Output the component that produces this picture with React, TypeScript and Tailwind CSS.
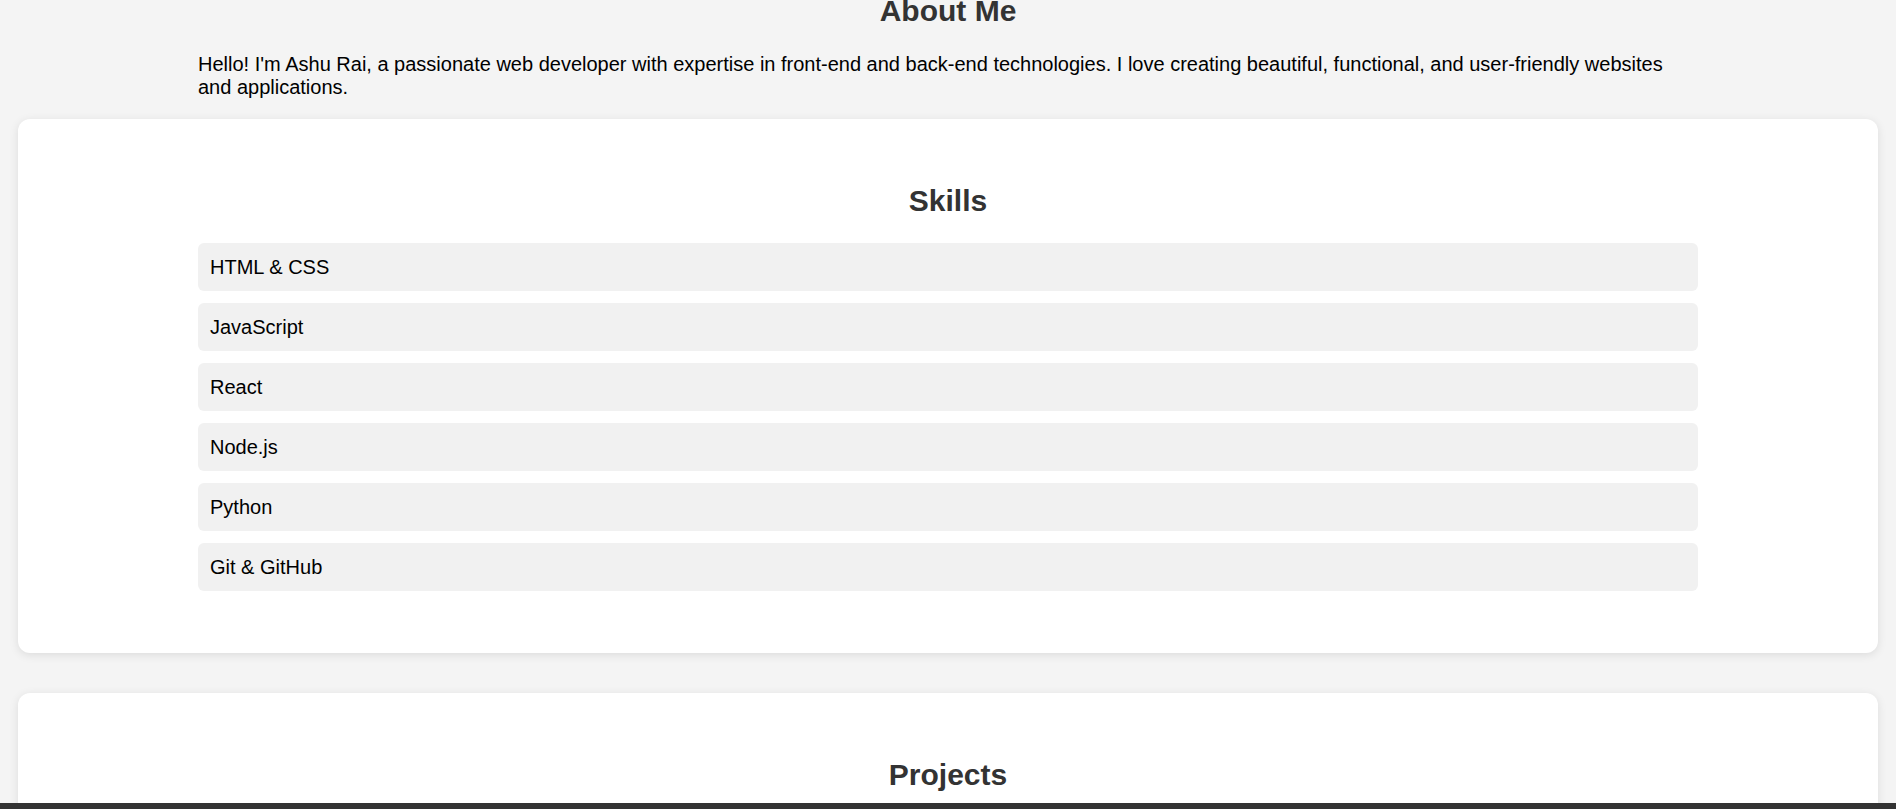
import React from 'react';

const skills = ['HTML & CSS', 'JavaScript', 'React', 'Node.js', 'Python', 'Git & GitHub'];

const FONT = "font-['Liberation_Sans',Arial,sans-serif]";
const HEADING = 'text-center text-[30px] font-bold leading-[33px] text-[#333]';
const CARD = 'mx-[18px] rounded-[12px] bg-white shadow-[0_2px_10px_rgba(0,0,0,0.1)]';

export default function App() {
  return (
    <div className={`flex h-[809px] flex-col overflow-hidden bg-[#f4f4f4] ${FONT}`}>
      <main className="min-h-0 flex-1 overflow-hidden">
        {/* ── About ── */}
        <section className="mx-auto max-w-[1500px] pb-[20px]">
          <h2 className={`-mt-[6px] ${HEADING}`}>About Me</h2>
          <p className="mt-[26px] text-[20px] leading-[23px] text-black">
            Hello! I'm Ashu Rai, a passionate web developer with expertise in front-end and back-end
            technologies. I love creating beautiful, functional, and user-friendly websites and
            applications.
          </p>
        </section>

        {/* ── Skills ── */}
        <section className={`${CARD} pt-[65px] pb-[62px]`}>
          <h2 className={HEADING}>Skills</h2>
          <ul className="mx-auto mt-[26px] flex max-w-[1500px] flex-col gap-[12px]">
            {skills.map((s) => (
              <li
                key={s}
                className="flex h-[48px] items-center rounded-[6px] bg-[#f1f1f1] px-[12px] text-[20px] text-black"
              >
                {s}
              </li>
            ))}
          </ul>
        </section>

        {/* ── Projects ── */}
        <section className={`${CARD} mt-[40px] pt-[65px] pb-[200px]`}>
          <h2 className={HEADING}>Projects</h2>
        </section>
      </main>
      <footer className="h-[6px] shrink-0 bg-[#333]" />
    </div>
  );
}
